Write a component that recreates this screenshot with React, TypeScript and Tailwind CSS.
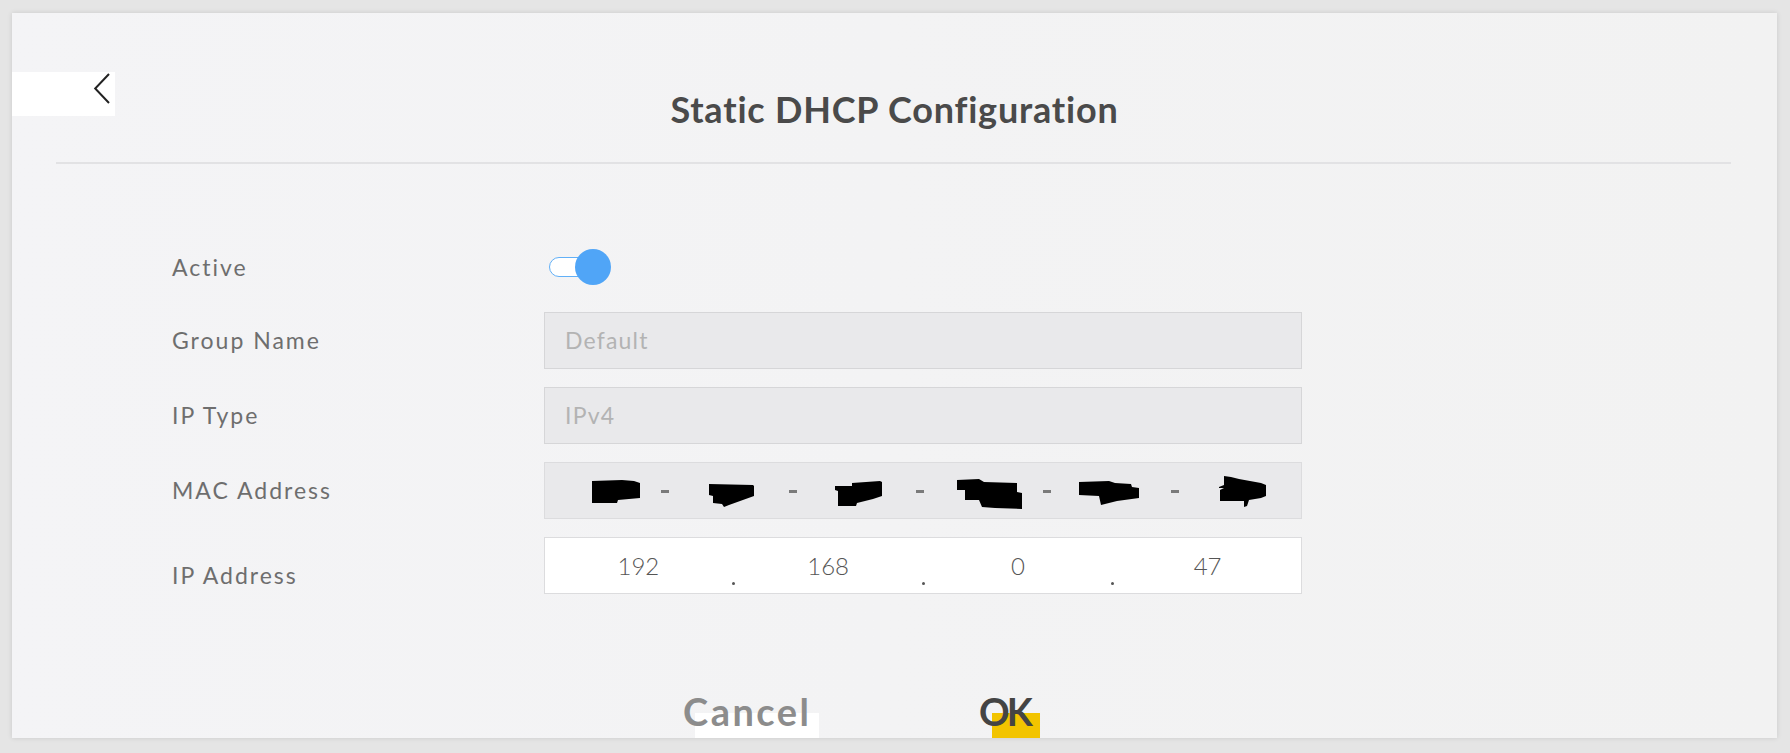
import React from 'react'

const font = { fontFamily: 'Lato, "Open Sans", sans-serif' }

// redaction blobs over the MAC address octets
const BLOBS: { w: number; h: number; pts: string; shift: string }[] = [
  { w: 48, h: 23, pts: '0,1 30,0 42,1 48,3 48,18 26,20 25,23 0,23', shift: 'translate-x-[11px] translate-y-[1px]' },
  { w: 45, h: 23, pts: '0,0 44,1 45,2 45,12 20,21 15,23 13,20 4,19 4,12 0,11', shift: 'translate-y-[5px]' },
  { w: 47, h: 25, pts: '17,2 45,0 47,1 47,15 38,18 22,22 21,25 3,25 3,10 0,9 0,5 17,5', shift: '-translate-x-[1px] translate-y-[3px]' },
  { w: 65, h: 31, pts: '0,2 22,1 27,4 60,5 60,14 65,15 65,31 38,30 25,29 22,22 8,22 8,12 0,12', shift: 'translate-x-[3px] translate-y-[3px]' },
  { w: 60, h: 24, pts: '0,1 30,0 36,2 52,3 53,6 60,7 60,17 38,20 22,24 20,15 0,14', shift: '-translate-x-[5px] translate-y-[2px]' },
  { w: 47, h: 31, pts: '5,0 12,1 20,3 42,7 47,9 47,20 42,22 30,24 28,30 25,31 25,25 1,25 1,14 5,12 0,12 0,11 5,9', shift: 'translate-x-[1px] translate-y-[1px]' },
]

const IP = ['192', '168', '0', '47']

function Label({ children, className = '' }: { children: React.ReactNode; className?: string }) {
  return (
    <div className={`w-[372px] shrink-0 text-[23px] leading-none tracking-[2px] text-[#6e6e6e] ${className}`}>
      {children}
    </div>
  )
}

function Toggle() {
  return (
    <div className="relative w-[62px] h-[36px] ml-[5px]">
      <div className="absolute left-0 top-[8px] w-[42px] h-[20px] rounded-full border-[1.5px] border-[#62b0f7] bg-white" />
      <div className="absolute right-0 top-0 w-[36px] h-[36px] rounded-full bg-[#50a5f7]" />
    </div>
  )
}

export default function App() {
  return (
    <div className="w-[1790px] h-[753px] bg-[#e5e5e5] pt-[13px] pl-[12px] overflow-hidden" style={font}>
      <div className="w-[1765px] h-[725px] bg-gradient-to-r from-[#f4f4f6] to-[#f2f2f2] shadow-[0_0_5px_rgba(0,0,0,0.12)] overflow-hidden flex flex-col">
        {/* Header */}
        <div className="grid grid-cols-[1fr_auto_1fr] h-[149px]">
          <div>
            <div className="mt-[59px] w-[103px] h-[44px] bg-white pl-[81px] pt-[1px]">
              <svg width="18" height="31" viewBox="0 0 18 31" fill="none">
                <path d="M16 1 L2.2 15.5 L16 30" stroke="#222" strokeWidth="2" strokeLinejoin="miter" />
              </svg>
            </div>
          </div>
          <h1 className="mt-[78px] text-[36px] leading-none font-bold tracking-[0.8px] text-[#4a4a4a]">Static DHCP Configuration</h1>
          <div />
        </div>
        <div className="ml-[44px] mr-[46px] h-[2px] bg-[#e2e2e4]" />

        {/* Form */}
        <div className="pl-[160px] flex flex-col">
          <div className="flex items-center mt-[85px] h-[36px]">
            <Label>Active</Label>
            <Toggle />
          </div>

          <div className="flex items-center mt-[27px]">
            <Label>Group Name</Label>
            <div className="w-[758px] h-[57px] border border-[#d6d6d8] bg-[#e9e9eb] flex items-center pl-[20px] text-[23px] leading-none tracking-[1.2px] text-[#b3b3b3]">
              Default
            </div>
          </div>

          <div className="flex items-center mt-[18px]">
            <Label>IP Type</Label>
            <div className="w-[758px] h-[57px] border border-[#d6d6d8] bg-[#e9e9eb] flex items-center pl-[20px] text-[23px] leading-none tracking-[1.2px] text-[#b3b3b3]">
              IPv4
            </div>
          </div>

          <div className="flex items-center mt-[18px]">
            <Label>MAC Address</Label>
            <div className="w-[758px] h-[57px] border border-[#dcdcde] bg-[#e9e9eb] flex items-center">
              {BLOBS.map((b, i) => (
                <React.Fragment key={i}>
                  {i > 0 && <div className="w-[8px] h-[3px] bg-[#7a7a7a] shrink-0 -translate-x-[3px] translate-y-[1px]" />}
                  <div className="flex-1 flex justify-center">
                    <svg className={b.shift} width={b.w} height={b.h} viewBox={`0 0 ${b.w} ${b.h}`}>
                      <polygon points={b.pts} fill="#000" />
                    </svg>
                  </div>
                </React.Fragment>
              ))}
            </div>
          </div>

          <div className="flex items-center mt-[18px]">
            <Label className="pt-[19px]">IP Address</Label>
            <div className="w-[758px] h-[57px] border border-[#dcdcde] bg-white flex items-center">
              {IP.map((n, i) => (
                <React.Fragment key={i}>
                  {i > 0 && (
                    <div className="w-[3px] self-stretch flex items-end pb-[8px] shrink-0">
                      <div className="w-[3px] h-[3px] rounded-full bg-[#555]" />
                    </div>
                  )}
                  <div className="flex-1 text-center text-[24px] leading-none font-light text-[#555]">{n}</div>
                </React.Fragment>
              ))}
            </div>
          </div>
        </div>

        {/* Buttons */}
        <div className="flex pl-[671px] mt-[98px]">
          <div className="relative w-[296px]">
            <div className="absolute left-[12px] top-[21px] w-[124px] h-[40px] bg-white" />
            <span className="relative text-[38px] leading-none font-bold tracking-[2.5px] text-[#8c8c8c]">Cancel</span>
          </div>
          <div className="relative">
            <div className="absolute left-[13px] top-[21px] w-[48px] h-[40px] bg-[#f2c400]" />
            <span className="relative text-[38px] leading-none font-bold tracking-[-3px] text-[#444]">OK</span>
          </div>
        </div>
      </div>
    </div>
  )
}
